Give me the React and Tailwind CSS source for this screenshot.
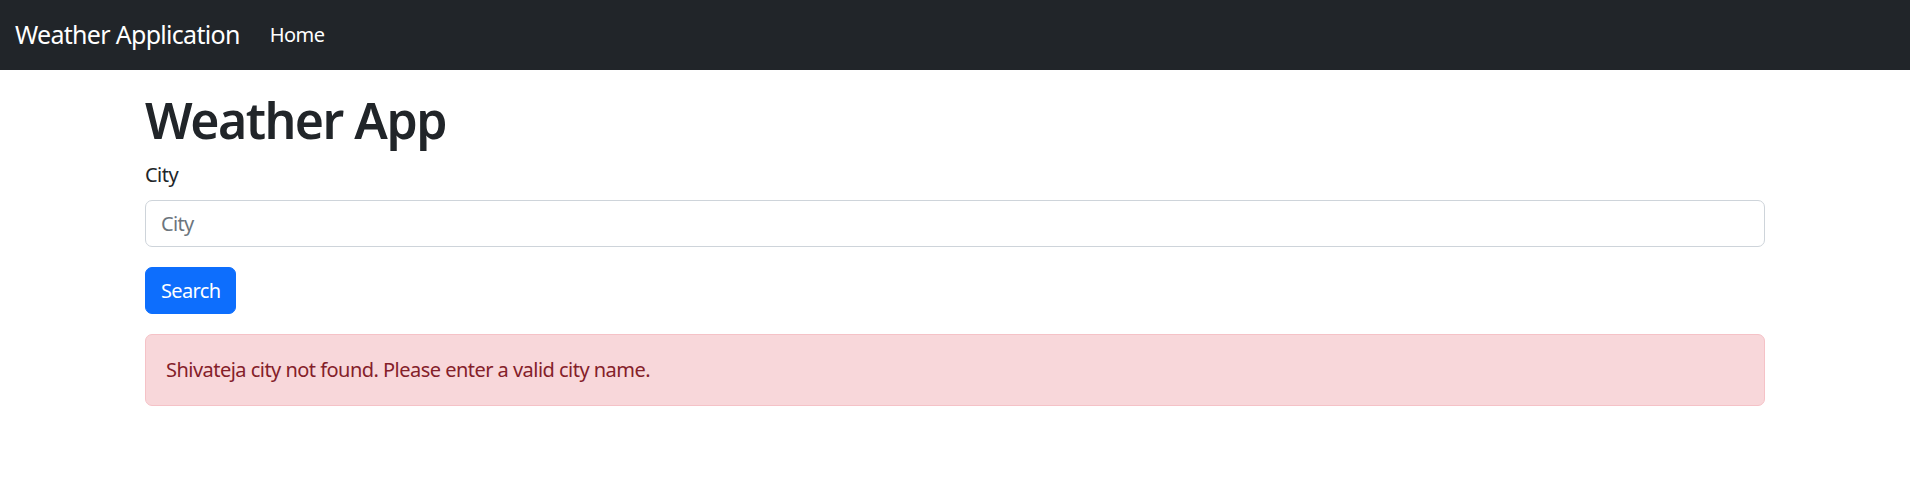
import { useState } from 'react';

export default function App() {
  const [city, setCity] = useState('');

  return (
    <div className="min-h-screen bg-white text-[#212529] font-['Noto_Sans',sans-serif] tracking-[-0.033em]">
      <nav className="h-[70px] bg-[#212529] flex items-center px-[15px]">
        <a href="#" className="text-[25px] leading-[1.5] text-white mr-[20px] tracking-[-0.028em]">Weather Application</a>
        <a href="#" className="text-[20px] leading-[30px] text-white px-[10px]">Home</a>
      </nav>

      <div className="max-w-[1650px] mx-auto px-[15px] mt-[20px]">
        <h1 className="text-[50px] font-semibold leading-[1.2] mb-[10px] tracking-[-0.03em]">Weather App</h1>
        <form onSubmit={e => e.preventDefault()}>
          <label htmlFor="city" className="block text-[20px] leading-[30px] mb-[10px]">City</label>
          <input
            id="city"
            value={city}
            onChange={e => setCity(e.target.value)}
            placeholder="City"
            className="block w-full h-[47px] border border-[#ced4da] rounded-[7px] px-[15px] text-[20px] tracking-[-0.033em] placeholder:text-[#6c757d] focus:outline-none"
          />
          <button type="submit" className="mt-[20px] h-[47px] px-[15px] bg-[#0d6efd] border border-[#0d6efd] text-white text-[20px] leading-[30px] tracking-[-0.033em] rounded-[7px]">
            Search
          </button>
        </form>
        <div className="mt-[20px] h-[72px] flex items-center px-[20px] bg-[#f8d7da] border border-[#f5c2c7] text-[#842029] text-[20px] leading-[30px] rounded-[7px]">
          Shivateja city not found. Please enter a valid city name.
        </div>
      </div>
    </div>
  );
}
